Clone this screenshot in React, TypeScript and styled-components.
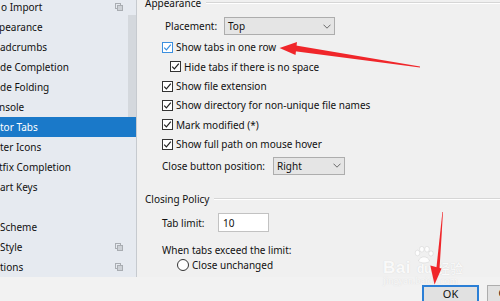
import React from "react";
import styled, { createGlobalStyle } from "styled-components";

const Global = createGlobalStyle`
  html, body { margin: 0; padding: 0; background: #f0f0f0; overflow: hidden; }
  body {
    font-family: "Noto Sans", "Liberation Sans", sans-serif;
    font-size: 10px;
    color: #111111;
  }
  * { box-sizing: border-box; }
`;

const Window = styled.div`
  position: relative;
  width: 500px;
  height: 301px;
  overflow: hidden;
  display: flex;
  flex-direction: column;
  background: #f0f0f0;
`;

const Main = styled.div`
  display: flex;
  height: 277px;
  flex: none;
  overflow: hidden;
  background: #f0f0f0;
`;

const Sidebar = styled.div`
  position: relative;
  width: 137px;
  flex: none;
  background: #e6eaf0;
  border-right: 1px solid #c6cacf;
  overflow: hidden;
`;

const ScrollThumb = styled.div`
  position: absolute;
  right: 0;
  top: 15px;
  width: 8px;
  height: 102px;
  background: #d4d8dd;
`;

const TreeList = styled.ul`
  list-style: none;
  margin: -3px 0 0;
  padding: 0;
  position: relative;
`;

const TreeRow = styled.li<{ $selected?: boolean }>`
  height: 20px;
  display: flex;
  align-items: center;
  padding: 0 13px 0 0;
  white-space: nowrap;
  background: ${(p) => (p.$selected ? "#1a79c9" : "transparent")};
  color: ${(p) => (p.$selected ? "#ffffff" : "#111111")};
`;

const TreeLabel = styled.span<{ $shift: number }>`
  margin-left: ${(p) => p.$shift}px;
  flex: 1;
`;

const Content = styled.div`
  flex: 1;
  display: flex;
  flex-direction: column;
  padding-left: 8px;
  overflow: hidden;
`;

const GroupTitle = styled.div<{ $mt: number }>`
  display: flex;
  align-items: center;
  gap: 5px;
  height: 14px;
  flex: none;
  margin-top: ${(p) => p.$mt}px;
  white-space: nowrap;
  &::after {
    content: "";
    flex: 1;
    border-top: 1px solid #d6d6d6;
    border-bottom: 1px solid #ffffff;
  }
`;

const Row = styled.div<{ $indent: number; $h: number; $mt?: number }>`
  display: flex;
  align-items: center;
  flex: none;
  height: ${(p) => p.$h}px;
  margin-top: ${(p) => p.$mt ?? 0}px;
  padding-left: ${(p) => p.$indent}px;
  white-space: nowrap;
`;

const FieldLabel = styled.span<{ $w: number }>`
  width: ${(p) => p.$w}px;
  flex: none;
`;

const Select = styled.div<{ $w: number }>`
  width: ${(p) => p.$w}px;
  height: 18px;
  display: flex;
  align-items: center;
  justify-content: space-between;
  padding: 0 3px 0 3px;
  background: #e5e5e5;
  border: 1px solid #adadad;
`;

const TextInput = styled.div`
  width: 51px;
  height: 19px;
  display: flex;
  align-items: center;
  padding-left: 4px;
  background: #ffffff;
  border: 1px solid #c2c2c2;
`;

const Box = styled.span<{ $focus?: boolean }>`
  width: 11px;
  height: 11px;
  flex: none;
  display: inline-flex;
  align-items: center;
  justify-content: center;
  margin-right: 3px;
  background: #ffffff;
  border: 1px solid ${(p) => (p.$focus ? "#3b8fdf" : "#333333")};
  color: ${(p) => (p.$focus ? "#3b8fdf" : "#222222")};
`;

const RadioDot = styled.span`
  width: 12px;
  height: 12px;
  flex: none;
  margin-right: 3px;
  border-radius: 50%;
  background: #ffffff;
  border: 1px solid #333333;
`;

const ButtonBar = styled.div`
  height: 24px;
  flex: none;
  display: flex;
  align-items: flex-start;
  gap: 8px;
  padding: 8px 0 0 422px;
  background: #f2f2f2;
`;

const DialogButton = styled.div<{ $default?: boolean }>`
  width: 57px;
  height: 23px;
  flex: none;
  display: flex;
  align-items: flex-start;
  justify-content: center;
  line-height: 14px;
  background: #e1e1e1;
  border: ${(p) => (p.$default ? "2px solid #2b7fd6" : "1px solid #adadad")};
  font-size: 11px;
`;

const Overlay = styled.svg`
  position: absolute;
  left: 0;
  top: 0;
  pointer-events: none;
`;

const Watermark = styled.div`
  position: absolute;
  left: 383px;
  top: 247px;
  display: flex;
  flex-direction: column;
  color: rgba(255, 255, 255, 0.9);
  text-shadow: 0 0 1px rgba(140, 140, 140, 0.3);
  pointer-events: none;
  font-family: "Liberation Sans", "Noto Sans CJK SC", sans-serif;
`;

const WmTop = styled.div`
  display: flex;
  align-items: flex-end;
  height: 28px;
`;

const WmBai = styled.span`
  font-size: 17px;
  font-weight: bold;
  line-height: 15px;
  letter-spacing: 0.5px;
`;

const WmDu = styled.span`
  position: relative;
  font-size: 12px;
  font-weight: bold;
  line-height: 12px;
  margin-left: 6px;
  width: 18px;
`;

const WmPaw = styled.svg`
  position: absolute;
  left: -3px;
  top: -17px;
`;

const WmCn = styled.span`
  font-family: "Noto Sans CJK SC", sans-serif;
  font-size: 13px;
  line-height: 14px;
  margin-left: 2px;
`;

const WmUrl = styled.span`
  font-family: "Liberation Serif", serif;
  font-size: 10px;
  line-height: 10px;
  margin-top: 1px;
  color: rgba(255, 255, 255, 0.8);
`;

const Check = () => (
  <svg width="9" height="9" viewBox="0 0 9 9">
    <path d="M1.2 4.6 L3.4 6.9 L7.8 1.6" fill="none" stroke="currentColor" strokeWidth="1.2" />
  </svg>
);

const Chevron = () => (
  <svg width="8" height="5" viewBox="0 0 8 5">
    <path d="M0.5 0.7 L4 4.2 L7.5 0.7" fill="none" stroke="#6a6a6a" strokeWidth="1" />
  </svg>
);

const CopyIcon = () => (
  <svg width="8" height="8" viewBox="0 0 8 8">
    <rect x="0.5" y="0.5" width="5" height="5" fill="#e6eaf0" stroke="#a9adb2" />
    <rect x="2.5" y="2.5" width="5" height="5" fill="#cdd1d6" stroke="#a9adb2" />
  </svg>
);

const Paw = () => (
  <WmPaw width="20" height="18" viewBox="0 0 20 18">
    <g fill="rgba(255,255,255,0.85)" stroke="rgba(160,160,160,0.35)" strokeWidth="0.6">
      <ellipse cx="3.5" cy="7" rx="2.3" ry="2.8" />
      <ellipse cx="7.8" cy="3.2" rx="2.3" ry="2.8" />
      <ellipse cx="13" cy="3.2" rx="2.3" ry="2.8" />
      <ellipse cx="17" cy="7.5" rx="2.2" ry="2.6" />
      <path d="M4.5 15 C6 9.5 14 9.5 15.5 15 C14 17.5 6 17.5 4.5 15 Z" />
    </g>
  </WmPaw>
);

type TreeItem = { label: string; shift: number; selected?: boolean; icon?: boolean };

const tree: TreeItem[] = [
  { label: "o Import", shift: 1, icon: true },
  { label: "pearance", shift: -1 },
  { label: "adcrumbs", shift: 0 },
  { label: "de Completion", shift: 0 },
  { label: "de Folding", shift: 0 },
  { label: "nsole", shift: -1 },
  { label: "tor Tabs", shift: 0, selected: true },
  { label: "ter Icons", shift: 0 },
  { label: "tfix Completion", shift: -1 },
  { label: "art Keys", shift: 0 },
  { label: "", shift: 0 },
  { label: "Scheme", shift: 0 },
  { label: "Style", shift: 0, icon: true },
  { label: "tions", shift: 0, icon: true },
];

const CheckRow = ({ label, indent, focus, mt }: { label: string; indent: number; focus?: boolean; mt?: number }) => (
  <Row $indent={indent} $h={19.4} $mt={mt}>
    <Box $focus={focus}>
      <Check />
    </Box>
    <span>{label}</span>
  </Row>
);

export default function App() {
  return (
    <Window>
      <Global />
      <Main>
        <Sidebar>
          <TreeList>
            {tree.map((t, i) => (
              <TreeRow key={i} $selected={t.selected}>
                <TreeLabel $shift={t.shift}>{t.label}</TreeLabel>
                {t.icon && <CopyIcon />}
              </TreeRow>
            ))}
          </TreeList>
          <ScrollThumb />
        </Sidebar>
        <Content>
          <GroupTitle $mt={-4}>Appearance</GroupTitle>
          <Row $indent={20} $h={20} $mt={6}>
            <FieldLabel $w={59}>Placement:</FieldLabel>
            <Select $w={111}>
              <span>Top</span>
              <Chevron />
            </Select>
          </Row>
          <CheckRow indent={17} mt={1.6} focus label="Show tabs in one row" />
          <CheckRow indent={25} label="Hide tabs if there is no space" />
          <CheckRow indent={17} label="Show file extension" />
          <CheckRow indent={17} label="Show directory for non-unique file names" />
          <CheckRow indent={17} label="Mark modified (*)" />
          <CheckRow indent={17} label="Show full path on mouse hover" />
          <Row $indent={17} $h={20} $mt={2}>
            <FieldLabel $w={111}>Close button position:</FieldLabel>
            <Select $w={72}>
              <span>Right</span>
              <Chevron />
            </Select>
          </Row>
          <GroupTitle $mt={16.5}>Closing Policy</GroupTitle>
          <Row $indent={17} $h={20} $mt={6.5}>
            <FieldLabel $w={56}>Tab limit:</FieldLabel>
            <TextInput>10</TextInput>
          </Row>
          <Row $indent={17} $h={14} $mt={10}>
            When tabs exceed the limit:
          </Row>
          <Row $indent={32} $h={16} $mt={0.5}>
            <RadioDot />
            <span>Close unchanged</span>
          </Row>
          <Row $indent={32} $h={16} $mt={3}>
            <RadioDot />
            <span>Close unused</span>
          </Row>
        </Content>
      </Main>
      <ButtonBar>
        <DialogButton $default>OK</DialogButton>
        <DialogButton>Cancel</DialogButton>
      </ButtonBar>

      <Watermark>
        <WmTop>
          <WmBai>Bai</WmBai>
          <WmDu>
            <Paw />
            du
          </WmDu>
          <WmCn>经验</WmCn>
        </WmTop>
        <WmUrl>jingyan.baidu.com</WmUrl>
      </Watermark>

      <Overlay width="500" height="301" viewBox="0 0 500 301">
        <polygon points="293,45 420,66.6 420,67.4 293,51" fill="#f0262a" />
        <polygon points="279.5,48 297,42 295.5,55" fill="#f0262a" />
        <polygon points="442.4,212 443,212 439.6,268 436.4,268" fill="#f0262a" />
        <polygon points="434.5,284.5 430.3,265.5 441.5,268.5" fill="#f0262a" />
      </Overlay>
    </Window>
  );
}
